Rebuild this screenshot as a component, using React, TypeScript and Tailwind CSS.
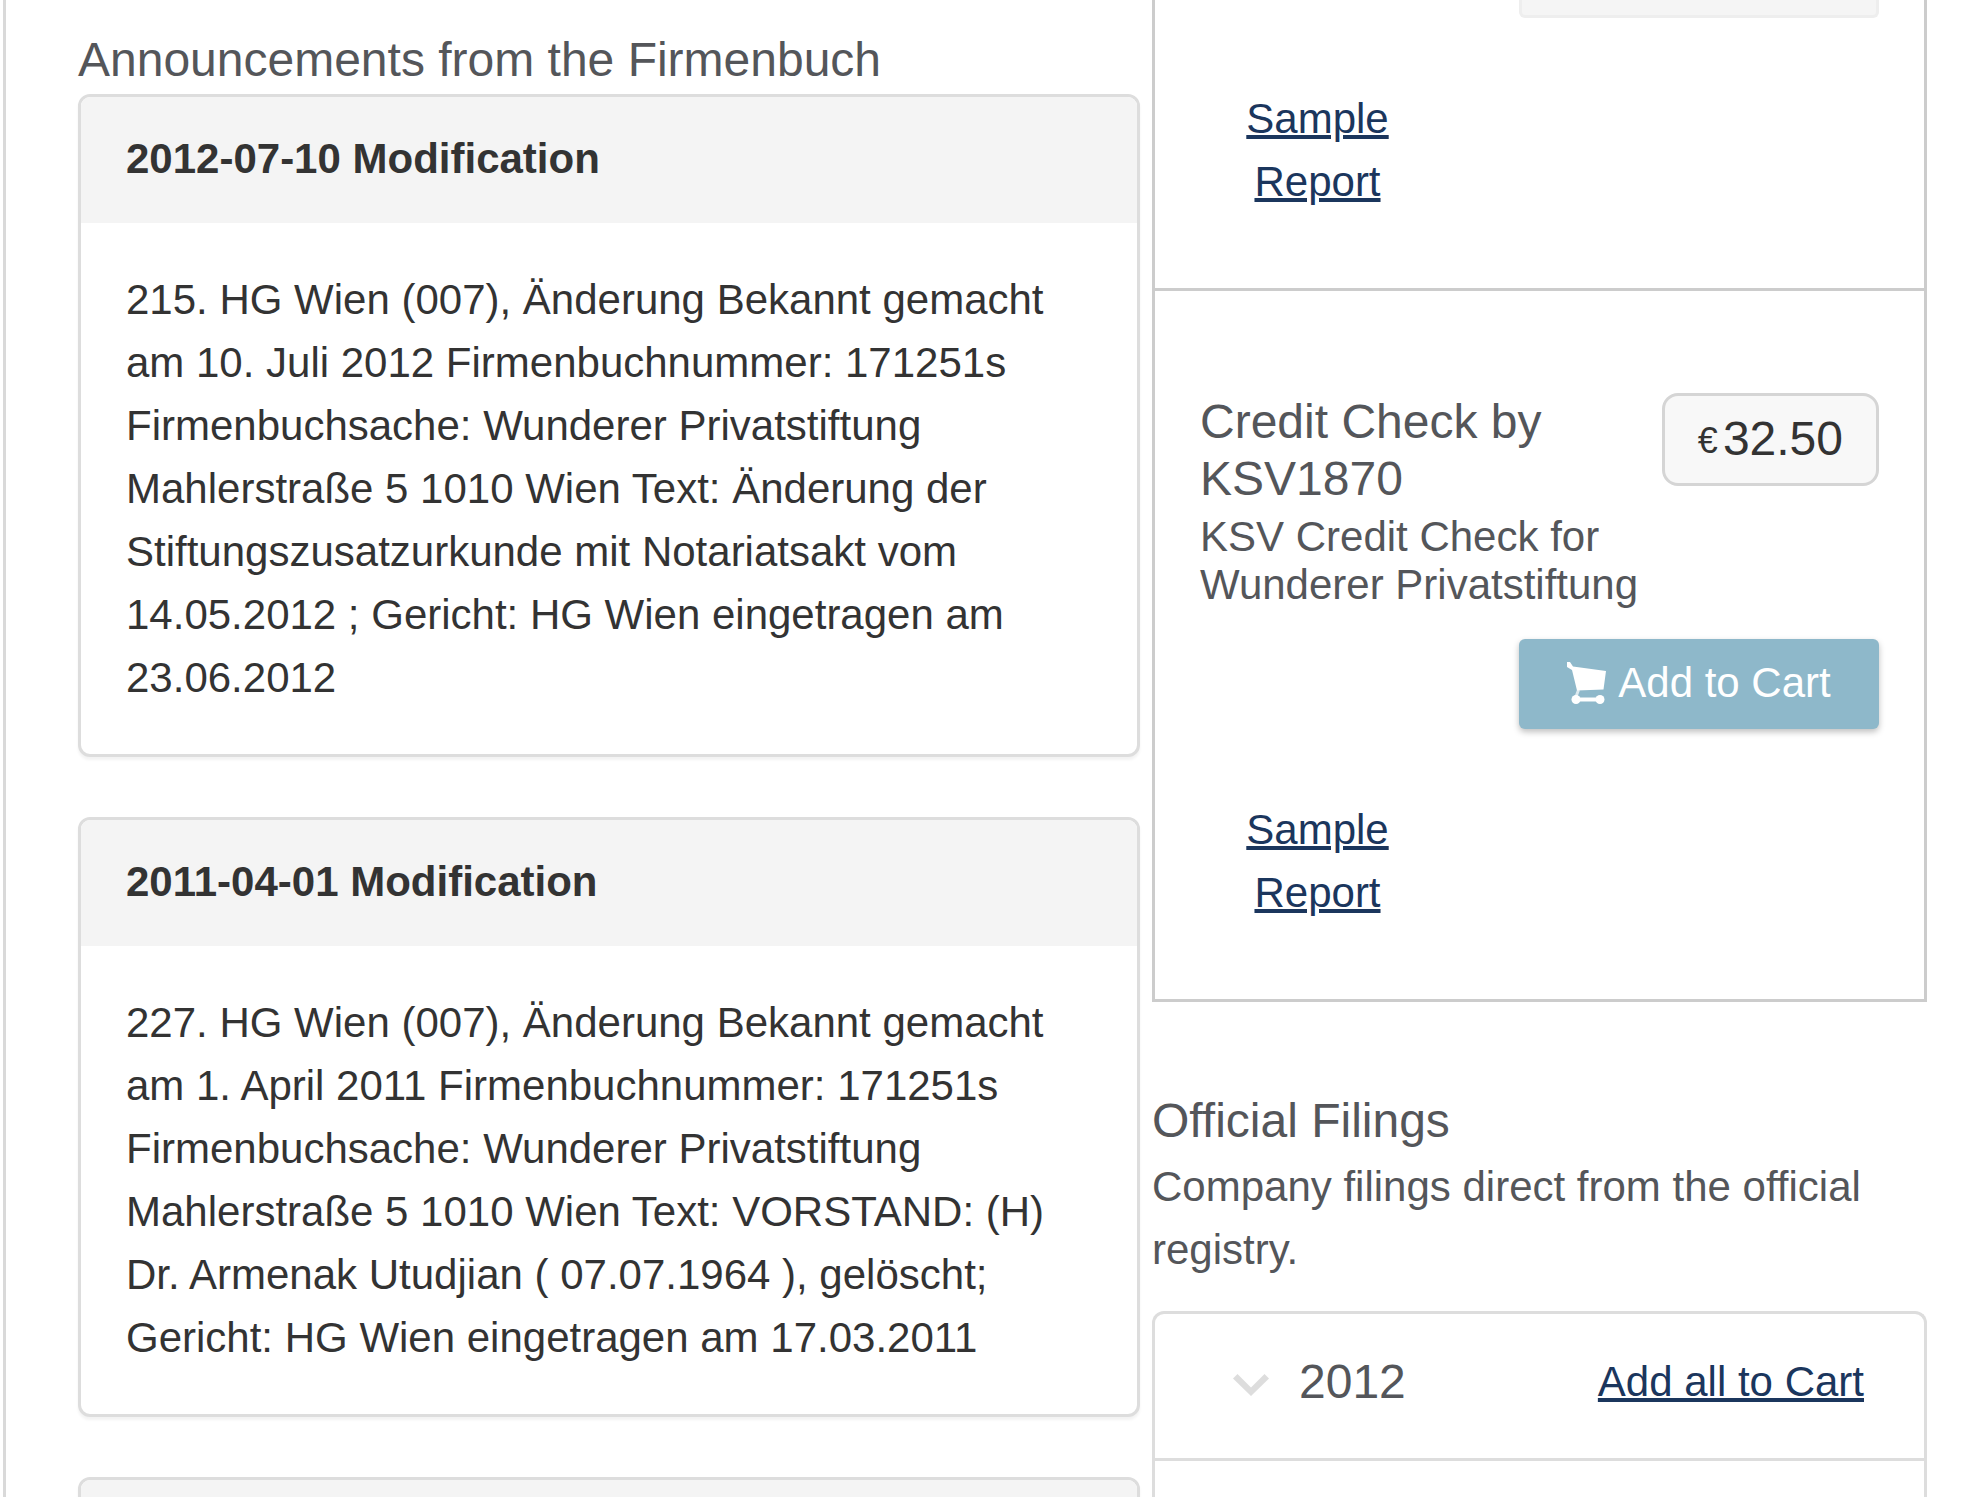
type Announcement = { title: string; text: string };

const announcements: Announcement[] = [
  {
    title: "2012-07-10 Modification",
    text: "215. HG Wien (007), Änderung Bekannt gemacht am 10. Juli 2012 Firmenbuchnummer: 171251s Firmenbuchsache: Wunderer Privatstiftung Mahlerstraße 5 1010 Wien Text: Änderung der Stiftungszusatzurkunde mit Notariatsakt vom 14.05.2012 ; Gericht: HG Wien eingetragen am 23.06.2012",
  },
  {
    title: "2011-04-01 Modification",
    text: "227. HG Wien (007), Änderung Bekannt gemacht am 1. April 2011 Firmenbuchnummer: 171251s Firmenbuchsache: Wunderer Privatstiftung Mahlerstraße 5 1010 Wien Text: VORSTAND: (H) Dr. Armenak Utudjian ( 07.07.1964 ), gelöscht; Gericht: HG Wien eingetragen am 17.03.2011",
  },
  { title: "", text: "" },
];

const linkClass = "text-[#1b365d] underline decoration-4";

function CartIcon() {
  return (
    <svg viewBox="0 0 39 42" className="h-[42px] w-[39px] shrink-0" fill="none" aria-hidden="true">
      <path d="M0 0h3l3 4.500 33 4.500-2.500 18.500L10 28.500 5 8 0 5z" fill="#fff" />
      <path d="M11.500 28 8.500 36" stroke="#fff" strokeWidth="3" strokeOpacity="0.7" />
      <path d="M9 37.500h24" stroke="#fff" strokeWidth="4" />
      <circle cx="9" cy="37.500" r="4.500" fill="#fff" />
      <circle cx="33" cy="37.500" r="4.500" fill="#fff" />
    </svg>
  );
}

function AnnouncementCard({ title, text }: Announcement) {
  return (
    <article className="overflow-hidden rounded-xl border-3 border-[#dddddd] bg-white shadow-[0_3px_3px_rgba(0,0,0,0.05)]">
      <h3 className="flex min-h-[126px] items-center bg-[#f4f4f4] px-[45px] pb-[3px] font-bold">{title}</h3>
      <p className="p-[45px]">{text}</p>
    </article>
  );
}

function SampleReport() {
  return (
    <div className="mt-[69px] mb-[75px] w-[235px] px-[45px] text-center">
      <a href="#sample-report" className={linkClass}>
        Sample Report
      </a>
    </div>
  );
}

function Products() {
  return (
    <section className="border-3 border-t-0 border-[#cccccc]">
      <div className="flex flex-col border-b-3 border-[#cccccc] px-[45px]">
        <button
          type="button"
          disabled
          aria-label="Unavailable"
          className="h-[18px] w-[360px] self-end rounded-b-md border-3 border-t-0 border-[#eeeeee] bg-[#f5f5f5]"
        />
        <SampleReport />
      </div>
      <div className="flex flex-col px-[45px] pt-[102px]">
        <div className="flex items-start justify-between">
          <div className="min-w-0 flex-1 text-[#54565a]">
            <h3 className="text-[48px] leading-[57px]">Credit Check by KSV1870</h3>
            <p className="mt-[6px] leading-[48px]">KSV Credit Check for Wunderer Privatstiftung</p>
          </div>
          <div className="flex shrink-0 items-center gap-[5px] rounded-2xl border-3 border-[#d5d5d5] bg-[#f8f8f8] px-[33px] pt-[14px] pb-4 text-[48px] leading-[57px]">
            <span className="mt-1 text-[36px] leading-9">€</span>
            <span>32.50</span>
          </div>
        </div>
        <button
          type="button"
          className="mt-[30px] flex h-[90px] w-[360px] items-center justify-center gap-3 self-end rounded-md bg-[#8eb8ca] pb-[3px] text-white shadow-[0_3px_6px_rgba(0,0,0,0.25)]"
        >
          <CartIcon />
          Add to Cart
        </button>
        <SampleReport />
      </div>
    </section>
  );
}

function Filings() {
  return (
    <section className="mt-[90px] text-[#54565a]">
      <h2 className="text-[48px] leading-[57px]">Official Filings</h2>
      <p className="mt-[6px]">Company filings direct from the official registry.</p>
      <div className="mt-[30px] rounded-t-xl border-3 border-b-0 border-[#dddddd]">
        <div className="flex h-[147px] items-center border-b-3 border-[#dddddd] pr-[60px] pb-[10px] pl-[78px]">
          <button type="button" className="flex items-center gap-[30px] text-[48px] leading-[57px]">
            <svg viewBox="0 0 36 22" className="mt-2 h-[22px] w-9" aria-hidden="true">
              <path d="M0 4.500 4.500 0 18 13.500 31.500 0 36 4.500 18 22z" fill="#dddddd" />
            </svg>
            2012
          </button>
          <a href="#add-all" className={`ml-auto ${linkClass}`}>
            Add all to Cart
          </a>
        </div>
        <div className="h-24" />
      </div>
    </section>
  );
}

export default function App() {
  return (
    <div className="h-screen overflow-hidden bg-white pl-[3px] font-['Liberation_Sans',Arial,sans-serif] text-[42px] leading-[63px] text-[#333333]">
      <main className="grid min-h-full grid-cols-[1062fr_775fr] gap-3 border-l-3 border-[#d9d9d9] pr-[39px] pl-[72px]">
        <section className="min-w-0 pt-[31px]">
          <h2 className="mb-[6px] text-[48px] leading-[57px] text-[#54565a]">Announcements from the Firmenbuch</h2>
          <div className="flex flex-col gap-[60px]">
            {announcements.map((item, i) => (
              <AnnouncementCard key={i} {...item} />
            ))}
          </div>
        </section>
        <aside className="min-w-0">
          <Products />
          <Filings />
        </aside>
      </main>
    </div>
  );
}
